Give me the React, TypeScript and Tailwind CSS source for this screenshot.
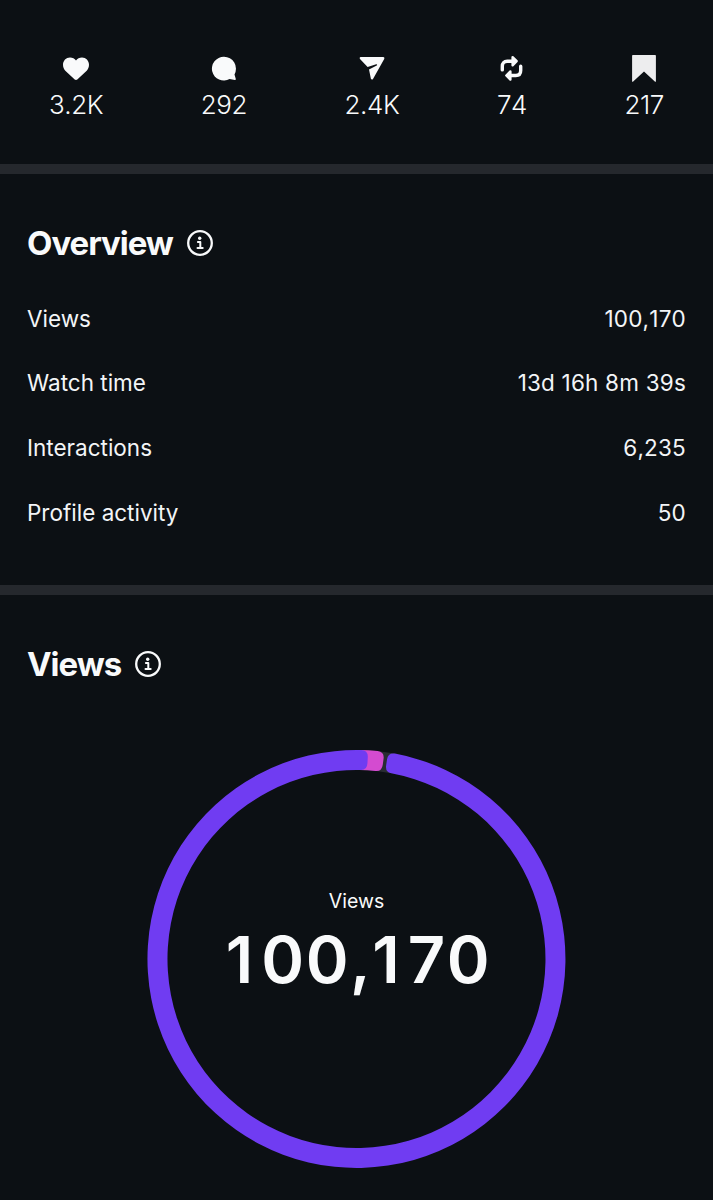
import type { ReactNode } from "react";

const HeartIcon = () => (
  <svg width="28" height="28" viewBox="0 0 28 28" fill="#f9fafb">
    <path d="M14 26c-.5 0-.9-.2-1.300-.5L3.300 16.700C1.900 15.300 1 13.200 1 10.800 1 6.600 4.100 3.400 8 3.400c2.500 0 4.700 1.200 6 3.200 1.300-2 3.500-3.200 6-3.200 3.900 0 7 3.200 7 7.400 0 2.400-.9 4.500-2.300 5.900l-9.400 8.800c-.4.3-.8.5-1.300.5z" />
  </svg>
);

const CommentIcon = () => (
  <svg width="28" height="28" viewBox="0 0 28 28" fill="#f9fafb">
    <path d="M14 2.800a11.900 11.900 0 1 0 5.600 22.300l5.300 1c.6.1 1-.4.900-1l-1.300-4.700A11.900 11.900 0 0 0 14 2.800z" />
  </svg>
);

const SendIcon = () => (
  <svg width="28" height="28" viewBox="0 0 28 28" fill="#f9fafb">
    <path d="M2.700 3.100h22.500c1 0 1.500 1 1 1.800L15 24.900c-.5.900-1.800.8-2.100-.2l-1.900-9.300 7.700-3.900c.8-.5.400-1.600-.5-1.300L9.600 13.100 2 4.900c-.7-.7-.3-1.800.7-1.800z" />
  </svg>
);

const RepostIcon = () => (
  <svg width="28" height="28" viewBox="0 0 28 28" fill="none" stroke="#f9fafb" strokeLinecap="round" strokeLinejoin="round">
    <path d="M4.300 15.900v-3.600c0-3.200 1.700-5 4.900-5H15" strokeWidth="3.400" />
    <path d="M14.600 3.100 18.700 7.200 14.600 11.300z" fill="#f9fafb" strokeWidth="2.400" />
    <path d="M22.700 12.300v4.200c0 3.200-1.700 5-4.900 5H12" strokeWidth="3.400" />
    <path d="M12.400 17.400 8.300 21.500 12.400 25.600z" fill="#f9fafb" strokeWidth="2.400" />
  </svg>
);

const BookmarkIcon = () => (
  <svg width="28" height="28" viewBox="0 0 28 28" fill="#ededee">
    <path d="M2.800 1h22.400c.4 0 .7.300.7.700v25.400c0 .9-.5 1-1.100.500L14 17.400 3.200 27.600c-.6.500-1.100.4-1.100-.5V1.700c0-.4.300-.7.700-.7z" />
  </svg>
);

const InfoIcon = () => (
  <svg width="28" height="28" viewBox="0 0 28 28" fill="none" stroke="#f9fafb">
    <circle cx="14" cy="14" r="11.800" strokeWidth="2.300" />
    <circle cx="13.700" cy="9.300" r="1.700" fill="#f9fafb" stroke="none" />
    <path d="M11.900 12.900h2.400v5.700M11.500 18.900h5.200" strokeWidth="2" strokeLinecap="round" strokeLinejoin="round" />
  </svg>
);

const stats: { icon: ReactNode; value: string }[] = [
  { icon: <HeartIcon />, value: "3.2K" },
  { icon: <CommentIcon />, value: "292" },
  { icon: <SendIcon />, value: "2.4K" },
  { icon: <RepostIcon />, value: "74" },
  { icon: <BookmarkIcon />, value: "217" },
];

const overview = [
  { label: "Views", value: "100,170" },
  { label: "Watch time", value: "13d 16h 8m 39s" },
  { label: "Interactions", value: "6,235" },
  { label: "Profile activity", value: "50" },
];

function SectionTitle({ children }: { children: string }) {
  return (
    <div className="flex items-center gap-[13px] h-10">
      <h2 className="text-[33px] leading-10 font-bold tracking-[-1.05px]">{children}</h2>
      <InfoIcon />
    </div>
  );
}

// Point on the ring, in degrees clockwise from the top
function point(deg: number, r: number) {
  const a = (deg * Math.PI) / 180;
  return `${(210 + r * Math.sin(a)).toFixed(2)} ${(210 - r * Math.cos(a)).toFixed(2)}`;
}

// Ring segment with slightly rounded corners
function segment(from: number, to: number) {
  const outer = 209;
  const inner = 189;
  const c = 7;
  const o = 1.9;
  const large = to - from > 180 ? 1 : 0;
  return [
    `M${point(from + o, outer)}`,
    `A${outer} ${outer} 0 ${large} 1 ${point(to - o, outer)}`,
    `Q${point(to, outer)} ${point(to, outer - c)}`,
    `L${point(to, inner + c)}`,
    `Q${point(to, inner)} ${point(to - o, inner)}`,
    `A${inner} ${inner} 0 ${large} 0 ${point(from + o, inner)}`,
    `Q${point(from, inner)} ${point(from, inner + c)}`,
    `L${point(from, outer - c)}`,
    `Q${point(from, outer)} ${point(from + o, outer)}`,
    "Z",
  ].join(" ");
}

// The narrow "1" gets extra room after it
function BigNumber() {
  return (
    <div className="text-[65px] leading-[78px] font-semibold mt-2 pl-1 tracking-[1.5px] whitespace-nowrap [font-kerning:none]">
      <span className="tracking-[8px]">1</span>00,<span className="tracking-[8px]">1</span>70
    </div>
  );
}

function ViewsRing() {
  return (
    <div className="grid place-items-center w-[419px] h-[420px] mx-auto">
      <svg className="col-start-1 row-start-1" width="419" height="420" viewBox="0.5 0 419 420">
        <path d={segment(-1, 12)} fill="#292c32" />
        <path d={segment(-1, 7.7)} fill="#d44bd0" />
        <path d={segment(8.700, 363.200)} fill="#703cf2" />
      </svg>
      <div className="col-start-1 row-start-1 flex flex-col items-center pb-[31px]">
        <span className="text-[19.500px] leading-6">Views</span>
        <BigNumber />
      </div>
    </div>
  );
}

export default function App() {
  return (
    <div className="w-[713px] h-[1200px] overflow-hidden bg-[#0c1014] text-[#f9fafb] font-['Inter','Liberation_Sans',sans-serif]">
      {/* Post stats */}
      <div className="flex justify-between h-[164px] pt-[54px] px-[49px]">
        {stats.map((stat) => (
          <div key={stat.value} className="flex flex-col items-center">
            {stat.icon}
            <span className="text-[26px] leading-8 mt-[7px] font-light tracking-[-0.4px] [font-kerning:none]">{stat.value}</span>
          </div>
        ))}
      </div>

      <div className="h-2.5 bg-[#25282d]" />

      {/* Overview */}
      <section className="h-[411px] px-[27px] pt-[49px]">
        <SectionTitle>Overview</SectionTitle>
        <div className="mt-[23.4px]">
          {overview.map((row) => (
            <div key={row.label} className="flex items-center justify-between h-[64.7px] text-[22.5px] leading-7 text-[#f3f5f7]">
              <span>{row.label}</span>
              <span className="tracking-[0.2px] [font-kerning:none]">{row.value}</span>
            </div>
          ))}
        </div>
      </section>

      <div className="h-2.5 bg-[#25282d]" />

      {/* Views */}
      <section className="px-[27px] pt-[49px]">
        <SectionTitle>Views</SectionTitle>
        <div className="mt-[65px]">
          <ViewsRing />
        </div>
      </section>
    </div>
  );
}
